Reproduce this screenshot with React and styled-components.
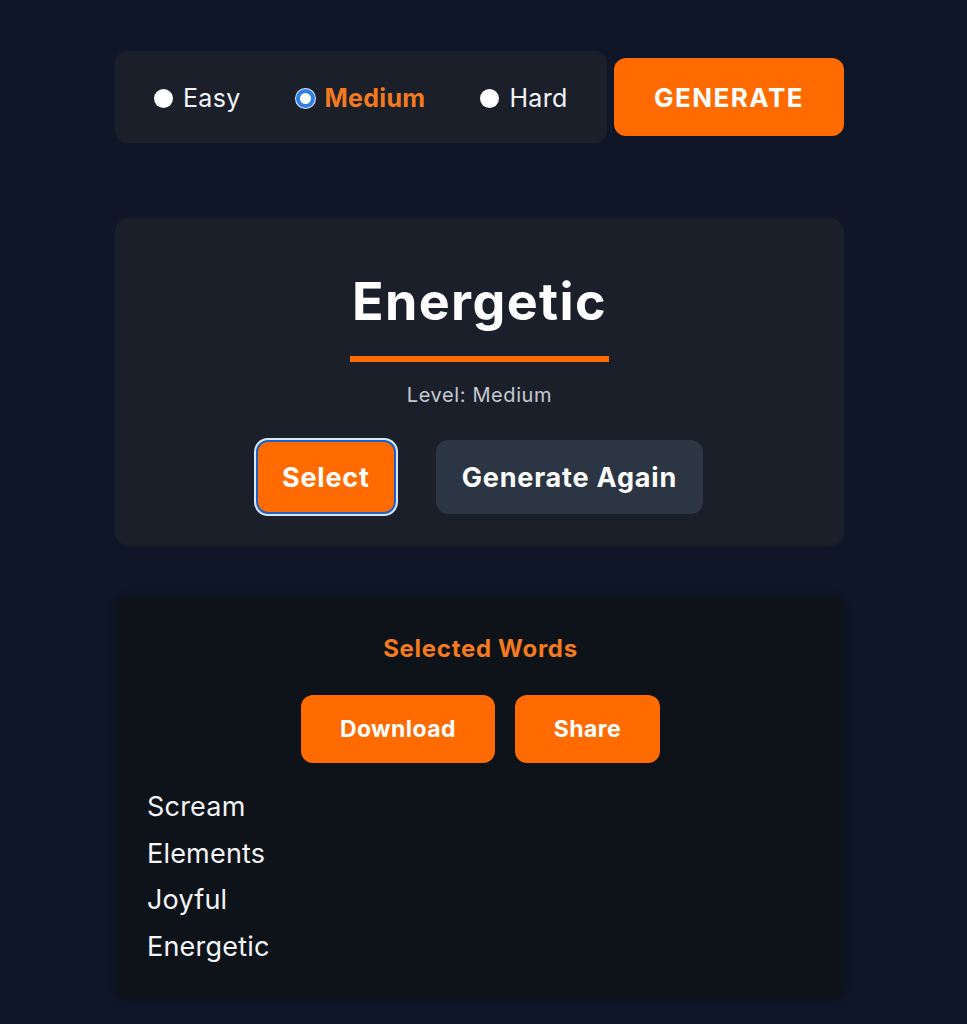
import React, { useState } from "react";
import styled, { createGlobalStyle } from "styled-components";

const GlobalStyle = createGlobalStyle`
  html, body {
    margin: 0;
    padding: 0;
    background: #0e1627;
  }
  body {
    font-family: Inter, "Noto Sans", "Liberation Sans", sans-serif;
    color: #ffffff;
    -webkit-font-smoothing: antialiased;
  }
  * { box-sizing: border-box; }
`;

const ORANGE = "#ff6b00";

const Page = styled.main`
  width: 729px;
  margin-left: 115px;
  padding-top: 51px;
  padding-bottom: 24px;
`;

const TopBar = styled.div`
  display: flex;
  align-items: center;
  gap: 7px;
`;

const RadioGroup = styled.div`
  width: 492px;
  height: 92px;
  background: #1b1f29;
  border-radius: 12px;
  display: flex;
  align-items: center;
  padding-left: 39px;
  gap: 55px;
`;

const RadioLabel = styled.label`
  display: flex;
  align-items: center;
  gap: 10px;
  font-size: 25px;
  line-height: 30px;
  font-weight: ${(p) => (p.$checked ? 700 : 400)};
  color: ${(p) => (p.$checked ? "#f47a1f" : "#f2f4f7")};
  cursor: pointer;
  letter-spacing: 0.3px;
  padding-top: 2px;
`;

const RadioDot = styled.span`
  width: 19px;
  height: 19px;
  border-radius: 50%;
  background: #ffffff;
  border: ${(p) => (p.$checked ? "4px solid #2f7fe6" : "none")};
  box-shadow: ${(p) => (p.$checked ? "0 0 0 1px #dfe9f7" : "none")};
  flex-shrink: 0;
`;

const HiddenInput = styled.input`
  position: absolute;
  opacity: 0;
  width: 0;
  height: 0;
`;

const GenerateButton = styled.button`
  width: 230px;
  height: 78px;
  border: none;
  border-radius: 12px;
  background: ${ORANGE};
  color: #ffffff;
  font-family: inherit;
  font-size: 26px;
  font-weight: 700;
  letter-spacing: 1.5px;
  cursor: pointer;
`;

const WordCard = styled.section`
  margin-top: 75px;
  background: #1b1f29;
  border-radius: 14px;
  padding: 54px 0 32px;
  display: flex;
  flex-direction: column;
  align-items: center;
`;

const Title = styled.h1`
  margin: 0;
  font-size: 52px;
  line-height: 60px;
  font-weight: 700;
  letter-spacing: 1.4px;
  padding: 0 2px 24px;
  border-bottom: 6px solid ${ORANGE};
`;

const Level = styled.p`
  margin: 21px 0 0;
  font-size: 20px;
  line-height: 24px;
  letter-spacing: 0.6px;
  color: #c5cad3;
`;

const ActionRow = styled.div`
  display: flex;
  justify-content: center;
  gap: ${(p) => p.$gap}px;
  margin-top: ${(p) => p.$top}px;
`;

const ActionButton = styled.button`
  height: ${(p) => p.$h}px;
  padding: 0 ${(p) => p.$pad}px;
  border-radius: 12px;
  border: ${(p) => (p.$focused ? "2px solid #1d62c9" : "none")};
  box-shadow: ${(p) => (p.$focused ? "0 0 0 2px #dbe8fb" : "none")};
  background: ${(p) => (p.$variant === "dark" ? "#2c3543" : ORANGE)};
  color: #ffffff;
  font-family: inherit;
  font-size: ${(p) => p.$fs}px;
  font-weight: 700;
  letter-spacing: ${(p) => p.$ls}px;
  cursor: pointer;
`;

const SelectedCard = styled.section`
  margin-top: 50px;
  background: #0e1219;
  border-radius: 12px;
  padding: 38px 30px 29px 32px;
  box-shadow: 0 0 6px rgba(0, 0, 0, 0.25);
`;

const SelectedTitle = styled.h2`
  margin: 0;
  text-align: center;
  font-size: 24px;
  line-height: 30px;
  font-weight: 700;
  letter-spacing: 0.7px;
  color: #f47a1f;
`;

const WordList = styled.ul`
  list-style: none;
  margin: 21px 0 0;
  padding: 0;
`;

const WordItem = styled.li`
  font-size: 27px;
  line-height: 46.7px;
  letter-spacing: 0.2px;
  color: #f4f5f7;
`;

const levels = ["Easy", "Medium", "Hard"];
const words = ["Scream", "Elements", "Joyful", "Energetic"];

export default function App() {
  const [level, setLevel] = useState("Medium");

  return (
    <>
      <GlobalStyle />
      <Page>
        <TopBar>
          <RadioGroup>
            {levels.map((l) => (
              <RadioLabel key={l} $checked={level === l}>
                <HiddenInput
                  type="radio"
                  name="level"
                  checked={level === l}
                  onChange={() => setLevel(l)}
                />
                <RadioDot $checked={level === l} />
                {l}
              </RadioLabel>
            ))}
          </RadioGroup>
          <GenerateButton>GENERATE</GenerateButton>
        </TopBar>

        <WordCard>
          <Title>Energetic</Title>
          <Level>Level: {level}</Level>
          <ActionRow $gap={40} $top={33}>
            <ActionButton $h={74} $pad={24} $fs={27} $ls={0.8} $focused>
              Select
            </ActionButton>
            <ActionButton $h={74} $pad={26} $fs={27} $ls={0.8} $variant="dark">
              Generate Again
            </ActionButton>
          </ActionRow>
        </WordCard>

        <SelectedCard>
          <SelectedTitle>Selected Words</SelectedTitle>
          <ActionRow $gap={20} $top={31}>
            <ActionButton $h={68} $pad={39} $fs={23} $ls={0.4}>
              Download
            </ActionButton>
            <ActionButton $h={68} $pad={39} $fs={23} $ls={0.4}>
              Share
            </ActionButton>
          </ActionRow>
          <WordList>
            {words.map((w) => (
              <WordItem key={w}>{w}</WordItem>
            ))}
          </WordList>
        </SelectedCard>
      </Page>
    </>
  );
}
